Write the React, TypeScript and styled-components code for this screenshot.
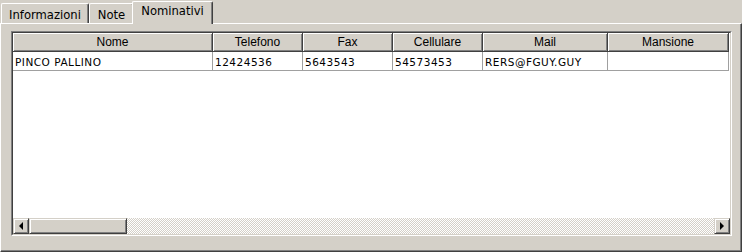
import React from "react";
import styled, { createGlobalStyle } from "styled-components";

const FACE = "#d4d0c8";
const SHADOW = "#808080";
const DARK = "#404040";

const GlobalStyle = createGlobalStyle`
   html, body {
      margin: 0;
      padding: 0;
      background: ${FACE};
   }
`;

const Window = styled.div`
   width: 742px;
   height: 252px;
   background: ${FACE};
   display: flex;
   flex-direction: column;
   overflow: hidden;
`;

const TabStrip = styled.div`
   height: 23px;
   display: flex;
   align-items: flex-end;
   padding-left: 1px;
   box-sizing: border-box;
`;

const Tab = styled.div<{ $w: number; $active?: boolean }>`
   box-sizing: border-box;
   width: ${(p) => p.$w}px;
   height: ${(p) => (p.$active ? 23 : 20)}px;
   margin: ${(p) => (p.$active ? "0 0 -1px -2px" : "0")};
   position: relative;
   z-index: ${(p) => (p.$active ? 2 : 1)};
   background: ${FACE};
   border-top: 1px solid #fff;
   border-left: 1px solid #fff;
   border-right: 1px solid ${DARK};
   border-radius: 2px 2px 0 0;
   box-shadow: inset -1px 0 0 ${SHADOW};
   display: flex;
   justify-content: center;
   align-items: flex-start;
   padding-top: ${(p) => (p.$active ? 2 : 4)}px;
   font-family: "DejaVu Sans", Verdana, sans-serif;
   font-size: 11.6px;
   color: #000;
   white-space: nowrap;
`;

const Panel = styled.div`
   flex: 1;
   box-sizing: border-box;
   border-top: 1px solid #fff;
   border-left: 1px solid #fff;
   border-right: 1px solid ${DARK};
   border-bottom: 1px solid ${DARK};
   box-shadow: inset -1px -1px 0 ${SHADOW};
   padding: 7px 0 0 10px;
`;

const Grid = styled.div`
   width: 721px;
   height: 205px;
   box-sizing: border-box;
   border: 1px solid;
   border-color: ${SHADOW} #fff #fff ${SHADOW};
`;

const GridBody = styled.div`
   height: 100%;
   box-sizing: border-box;
   border: 1px solid;
   border-color: ${DARK} ${FACE} ${FACE} ${DARK};
   background: #fff;
   display: flex;
   flex-direction: column;
`;

const Row = styled.div`
   display: flex;
   height: 19px;
   flex-shrink: 0;
`;

const HeaderCell = styled.div<{ $w: number }>`
   box-sizing: border-box;
   width: ${(p) => p.$w}px;
   height: 19px;
   background: ${FACE};
   border-right: 1px solid ${DARK};
   border-bottom: 1px solid ${DARK};
   box-shadow: inset 1px 1px 0 #fff, inset -1px -1px 0 ${SHADOW};
   font-family: "Liberation Sans", Arial, sans-serif;
   font-size: 12px;
   line-height: 18px;
   text-align: center;
   color: #000;
`;

const DataCell = styled.div<{ $w: number }>`
   box-sizing: border-box;
   width: ${(p) => p.$w}px;
   height: 19px;
   border-right: 1px solid #a0a0a0;
   border-bottom: 1px solid #a0a0a0;
   padding: 2px 0 0 2px;
   font-family: "DejaVu Sans", Verdana, sans-serif;
   font-size: 10.5px;
   letter-spacing: 0.5px;
   line-height: 16px;
   color: #000;
   white-space: nowrap;
   overflow: hidden;
`;

const Filler = styled.div`
   flex: 1;
`;

const HScroll = styled.div`
   height: 16px;
   display: flex;
   flex-shrink: 0;
`;

const ScrollButton = styled.div`
   width: 16px;
   height: 16px;
   box-sizing: border-box;
   background: ${FACE};
   border: 1px solid;
   border-color: ${FACE} ${DARK} ${DARK} ${FACE};
   box-shadow: inset 1px 1px 0 #fff, inset -1px -1px 0 ${SHADOW};
   display: flex;
   align-items: center;
   justify-content: center;
`;

const Arrow = styled.span<{ $dir: "left" | "right" }>`
   width: 0;
   height: 0;
   border-top: 4px solid transparent;
   border-bottom: 4px solid transparent;
   ${(p) => (p.$dir === "left" ? "border-right: 4px solid #000;" : "border-left: 4px solid #000;")}
`;

const Track = styled.div`
   flex: 1;
   display: flex;
   background-color: ${FACE};
   background-image: repeating-conic-gradient(#fff 0 25%, ${FACE} 0 50%);
   background-size: 2px 2px;
`;

const Thumb = styled.div`
   width: 98px;
   height: 16px;
   box-sizing: border-box;
   background: ${FACE};
   border: 1px solid;
   border-color: ${FACE} ${DARK} ${DARK} ${FACE};
   box-shadow: inset 1px 1px 0 #fff, inset -1px -1px 0 ${SHADOW};
`;

const columns = [
   { title: "Nome", w: 200 },
   { title: "Telefono", w: 90 },
   { title: "Fax", w: 90 },
   { title: "Cellulare", w: 90 },
   { title: "Mail", w: 125 },
   { title: "Mansione", w: 121 },
];

const rows = [["PINCO PALLINO", "12424536", "5643543", "54573453", "RERS@FGUY.GUY", ""]];

const App = () => {
   return (
      <>
         <GlobalStyle />
         <Window>
            <TabStrip>
               <Tab $w={88}>Informazioni</Tab>
               <Tab $w={45}>Note</Tab>
               <Tab $w={81} $active>
                  Nominativi
               </Tab>
            </TabStrip>
            <Panel>
               <Grid>
                  <GridBody>
                     <Row>
                        {columns.map((c) => (
                           <HeaderCell key={c.title} $w={c.w}>
                              {c.title}
                           </HeaderCell>
                        ))}
                     </Row>
                     {rows.map((r, i) => (
                        <Row key={i}>
                           {r.map((v, j) => (
                              <DataCell key={j} $w={columns[j].w}>
                                 {v}
                              </DataCell>
                           ))}
                        </Row>
                     ))}
                     <Filler />
                     <HScroll>
                        <ScrollButton>
                           <Arrow $dir="left" />
                        </ScrollButton>
                        <Track>
                           <Thumb />
                        </Track>
                        <ScrollButton>
                           <Arrow $dir="right" />
                        </ScrollButton>
                     </HScroll>
                  </GridBody>
               </Grid>
            </Panel>
         </Window>
      </>
   );
};

export default App;
